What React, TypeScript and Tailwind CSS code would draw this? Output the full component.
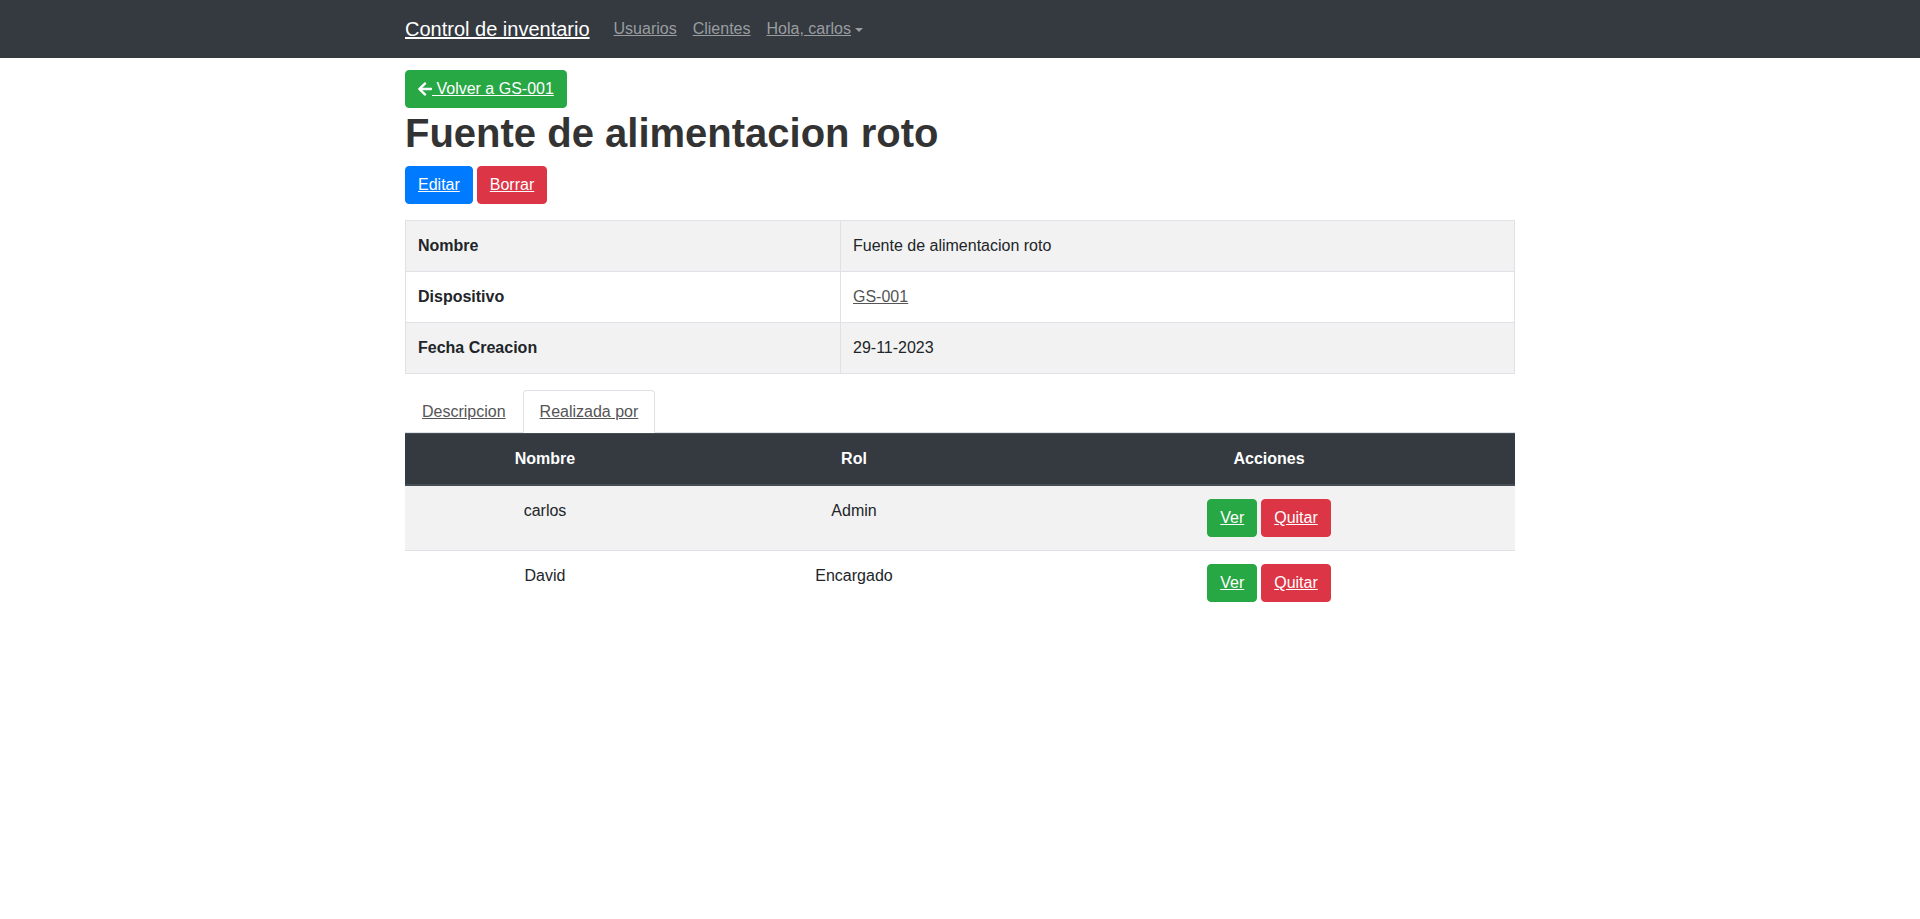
import { FaArrowLeft } from 'react-icons/fa';

const users = [
  { name: 'carlos', role: 'Admin' },
  { name: 'David', role: 'Encargado' },
];

function Btn({ color, children }: { color: string; children: React.ReactNode }) {
  return (
    <a
      href="#"
      className={`inline-block h-[38px] rounded-[4px] border px-3 py-[6px] align-middle text-base leading-6 text-white underline ${color}`}
    >
      {children}
    </a>
  );
}

export default function App() {
  return (
    <div className="min-h-screen bg-white font-['Liberation_Sans',Arial,sans-serif] text-base leading-6 text-[#212529]">
      <nav className="h-[58px] bg-[#343a40]">
        <div className="mx-auto flex h-full w-[1110px] items-center">
          <a href="#" className="mr-4 text-[20px] leading-[30px] text-white underline">
            Control de inventario
          </a>
          <a href="#" className="px-2 text-[#9a9da0] underline">Usuarios</a>
          <a href="#" className="px-2 text-[#9a9da0] underline">Clientes</a>
          <a href="#" className="flex items-center px-2 text-[#9a9da0]">
            <span className="underline">Hola, carlos</span>
            <span className="ml-[4px] mt-[2px] h-0 w-0 border-x-[4.8px] border-t-[4.8px] border-x-transparent border-t-[#9a9da0]" />
          </a>
        </div>
      </nav>

      <main className="mx-auto w-[1110px]">
        <div className="mt-[12px]">
          <Btn color="border-[#28a745] bg-[#28a745]">
            <FaArrowLeft className="inline-block h-4 w-[14px] align-[-3px]" />
            <span> Volver a GS-001</span>
          </Btn>
        </div>
        <h1 className="mb-[9px] mt-px text-[40px] font-bold leading-[48px] text-[#333]">Fuente de alimentacion roto</h1>
        <div className="mb-[16px] flex gap-[4px]">
          <Btn color="border-[#007bff] bg-[#007bff]">Editar</Btn>
          <Btn color="border-[#dc3545] bg-[#dc3545]">Borrar</Btn>
        </div>

        <table className="mb-4 w-full border-collapse border border-[#dee2e6]">
          <tbody>
            <tr className="bg-[#f2f2f2]">
              <th className="w-[435px] border border-[#dee2e6] px-3 py-[13px] text-left font-bold">Nombre</th>
              <td className="border border-[#dee2e6] px-3 py-[13px]">Fuente de alimentacion roto</td>
            </tr>
            <tr>
              <th className="border border-[#dee2e6] px-3 py-[13px] text-left font-bold">Dispositivo</th>
              <td className="border border-[#dee2e6] px-3 py-[13px]">
                <a href="#" className="text-[#555] underline">GS-001</a>
              </td>
            </tr>
            <tr className="bg-[#f2f2f2]">
              <th className="border border-[#dee2e6] px-3 py-[13px] text-left font-bold">Fecha Creacion</th>
              <td className="border border-[#dee2e6] px-3 py-[13px]">29-11-2023</td>
            </tr>
          </tbody>
        </table>

        <ul className="flex border-b border-[#dee2e6]">
          <li className="-mb-px">
            <a href="#" className="block border border-transparent px-4 pb-[8px] pt-[9px] text-[#555] underline">Descripcion</a>
          </li>
          <li className="-mb-px">
            <a href="#" className="block rounded-t-[4px] border border-[#dee2e6] border-b-white bg-white px-4 pb-[8px] pt-[9px] text-[#555] underline">
              Realizada por
            </a>
          </li>
        </ul>

        <table className="w-full border-collapse text-center">
          <thead>
            <tr className="bg-[#343a40] text-white">
              <th className="w-[280px] border-t border-b-2 border-[#454d55] px-3 py-[13px] font-bold">Nombre</th>
              <th className="w-[338px] border-t border-b-2 border-[#454d55] px-3 py-[13px] font-bold">Rol</th>
              <th className="border-t border-b-2 border-[#454d55] px-3 py-[13px] font-bold">Acciones</th>
            </tr>
          </thead>
          <tbody>
            {users.map((u, i) => (
              <tr key={u.name} className={i % 2 === 0 ? 'bg-[#f2f2f2]' : ''}>
                <td className={`px-3 py-[13px] align-top ${i > 0 ? 'border-t border-[#dee2e6]' : ''}`}>{u.name}</td>
                <td className={`px-3 py-[13px] align-top ${i > 0 ? 'border-t border-[#dee2e6]' : ''}`}>{u.role}</td>
                <td className={`px-3 py-[13px] align-top ${i > 0 ? 'border-t border-[#dee2e6]' : ''}`}>
                  <div className="flex justify-center gap-[4px]">
                    <Btn color="border-[#28a745] bg-[#28a745]">Ver</Btn>
                    <Btn color="border-[#dc3545] bg-[#dc3545]">Quitar</Btn>
                  </div>
                </td>
              </tr>
            ))}
          </tbody>
        </table>
      </main>
    </div>
  );
}
